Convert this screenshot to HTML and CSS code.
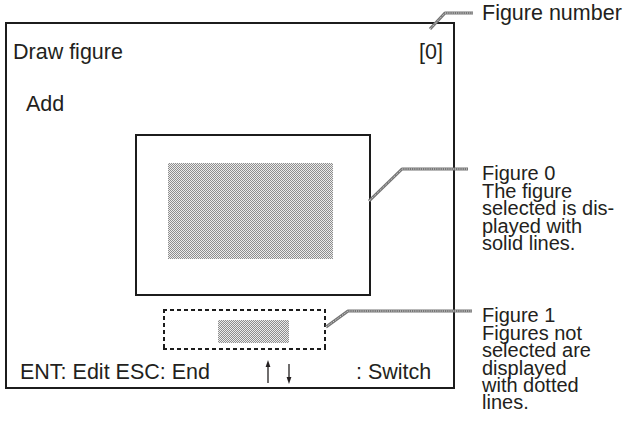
FILE: index.html
```html
<!DOCTYPE html>
<html lang="en">
<head>
<meta charset="utf-8">
<title>Draw figure</title>
<link rel="stylesheet" href="styles.css">
</head>
<body>
<div class="page">
  <div class="screen">
    <div class="hdr"><span>Draw figure</span><span>[0]</span></div>
    <div class="mode">Add</div>
    <div class="fig sel"><div class="shade big"></div></div>
    <div class="fig unsel"><div class="shade small"></div></div>
    <div class="foot">
      <span class="keys">ENT: Edit ESC: End</span>
      <svg class="arrows" width="36" height="24" viewBox="0 0 36 24">
        <line x1="8" y1="23" x2="8" y2="4" stroke="#231f20" stroke-width="1.3"/>
        <polygon points="5.6,7 8,0 10.4,7" fill="#231f20"/>
        <line x1="29" y1="4" x2="29" y2="19" stroke="#231f20" stroke-width="1.3"/>
        <polygon points="26.6,17 29,24 31.4,17" fill="#231f20"/>
      </svg>
      <span class="switch">: Switch</span>
    </div>
  </div>
  <div class="notes">
    <p class="note n0">Figure number</p>
    <p class="note n1">Figure 0<br>The figure<br>selected is dis-<br>played with<br>solid lines.</p>
    <p class="note n2">Figure 1<br>Figures not<br>selected are<br>displayed<br>with dotted<br>lines.</p>
  </div>
  <svg class="leaders" width="627" height="431" viewBox="0 0 627 431">
    <g fill="none" stroke-linejoin="round">
      <path class="ld" d="M430,29 L445,13 L473,13"/>
      <path class="ld" d="M369,201 L402,169 L468,169"/>
      <path class="ld" d="M326,327 L348,311 L472,311"/>
      <path class="lt" d="M430,29 L445,13 L473,13"/>
      <path class="lt" d="M369,201 L402,169 L468,169"/>
      <path class="lt" d="M326,327 L348,311 L472,311"/>
    </g>
  </svg>
</div>
</body>
</html>
```

FILE: styles.css
```css
html, body {
  margin: 0;
  padding: 0;
  background: #fff;
}

body {
  font-family: "Liberation Sans", Arial, sans-serif;
  font-size: 21.5px;
  color: #231f20;
}

.page {
  position: relative;
  width: 627px;
  height: 431px;
  display: flex;
  align-items: flex-start;
}

.screen {
  box-sizing: border-box;
  width: 450px;
  height: 367px;
  margin: 22px 0 0 5px;
  border: 2px solid #1c1c1c;
  padding: 16px 10px 3px 6px;
  display: flex;
  flex-direction: column;
  line-height: 24px;
}

.hdr {
  display: flex;
  justify-content: space-between;
}

.mode {
  margin: 28px 0 0 13px;
}

.fig {
  box-sizing: border-box;
  flex: none;
}

.sel {
  margin: 18px 0 0 122px;
  width: 236px;
  height: 162px;
  border: 2px solid #1c1c1c;
  padding: 27px 0 0 31px;
}

.unsel {
  margin: 13px 0 0 150px;
  width: 163px;
  height: 41px;
  padding: 11px 0 0 55px;
  background:
    linear-gradient(90deg, #1c1c1c 4px, transparent 0) left top / 7px 2px repeat-x,
    linear-gradient(90deg, #1c1c1c 4px, transparent 0) left bottom / 7px 2px repeat-x,
    linear-gradient(#1c1c1c 4px, transparent 0) left top / 2px 7px repeat-y,
    linear-gradient(#1c1c1c 4px, transparent 0) right top / 2px 7px repeat-y;
}

.shade {
  background: repeating-conic-gradient(#8e8e8e 0% 25%, #ececec 0% 50%) 0 0 / 2px 2px;
}

.shade.big {
  width: 165px;
  height: 96px;
}

.shade.small {
  width: 71px;
  height: 23px;
}

.foot {
  margin-top: 10px;
  display: flex;
  align-items: center;
  height: 24px;
}

.keys {
  width: 240px;
  margin-left: 7px;
  white-space: nowrap;
}

.arrows {
  display: block;
  flex: none;
}

.switch {
  margin-left: 60px;
  white-space: nowrap;
}

.notes {
  margin-left: 27px;
  display: flex;
  flex-direction: column;
  font-size: 20px;
  line-height: 17.4px;
}

.note {
  margin: 0;
  white-space: nowrap;
}

.n0 { margin-top: 5px; font-size: 21.5px; }
.n1 { margin-top: 143px; }
.n2 { margin-top: 55px; }

.leaders {
  position: absolute;
  left: 0;
  top: 0;
  pointer-events: none;
}

.ld {
  stroke: #747474;
  stroke-width: 3;
}

.lt {
  stroke: #e8e8e8;
  stroke-width: 1;
  stroke-dasharray: 1 1.2;
}
```
